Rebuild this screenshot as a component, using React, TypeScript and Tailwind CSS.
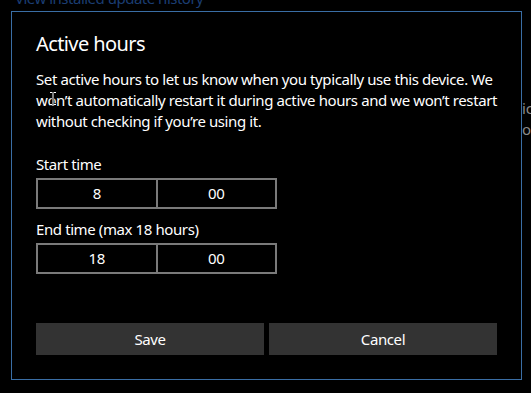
export default function App() {
  return (
    <div className="relative w-[531px] h-[393px] bg-black overflow-hidden font-['Noto_Sans',sans-serif] text-white">
      <div className="absolute left-[15px] top-[-12px] whitespace-nowrap text-[15px] leading-[21px] tracking-[-0.5px] text-[#1b3d72]">
        View installed update history
      </div>
      <div className="absolute left-[522px] top-[98px] text-[15px] leading-[21px] text-[#8a8a8a]">
        <div>ic</div>
        <div>os</div>
      </div>
      <div className="relative ml-[11px] mt-[11px] w-[511px] h-[369px] border border-[#3a6ea5] bg-black px-[24px] flex flex-col tracking-[-0.4px]">
        <div className="mt-[18px] text-[20px] leading-[28px] tracking-[-0.6px]">Active hours</div>
        <div className="mt-[11px] whitespace-nowrap text-[15px] leading-[21px]">
          <div>Set active hours to let us know when you typically use this device. We</div>
          <div>won’t automatically restart it during active hours and we won’t restart</div>
          <div>without checking if you’re using it.</div>
        </div>
        <div className="mt-[22px] text-[15px] leading-[21px]">Start time</div>
        <div className="mt-[3px] flex w-[241px] h-[31px] border-2 border-[#7a7a7a] text-[15px]">
          <div className="flex-1 flex items-center justify-center border-r-2 border-[#7a7a7a]">8</div>
          <div className="flex-1 flex items-center justify-center">00</div>
        </div>
        <div className="mt-[10px] text-[15px] leading-[21px]">End time (max 18 hours)</div>
        <div className="mt-[3px] flex w-[241px] h-[31px] border-2 border-[#7a7a7a] text-[15px]">
          <div className="flex-1 flex items-center justify-center border-r-2 border-[#7a7a7a]">18</div>
          <div className="flex-1 flex items-center justify-center">00</div>
        </div>
        <div className="mt-auto mb-[24px] flex gap-[5px]">
          <button className="flex-1 h-[32px] bg-[#333333] text-[15px] text-white tracking-[-0.4px]">Save</button>
          <button className="flex-1 h-[32px] bg-[#333333] text-[15px] text-white tracking-[-0.4px]">Cancel</button>
        </div>
        <svg className="absolute left-[37px] top-[79px]" width="8" height="15" viewBox="0 0 8 15">
          <path d="M1 1.5h2.5M4.5 1.5H7M4 2v11M1 13.5h2.5M4.5 13.5H7" stroke="#000" strokeWidth="2.5" fill="none" />
          <path d="M1 1.5h2.5M4.5 1.5H7M4 2v11M1 13.5h2.5M4.5 13.5H7" stroke="#fff" strokeWidth="1" fill="none" />
        </svg>
      </div>
    </div>
  );
}
